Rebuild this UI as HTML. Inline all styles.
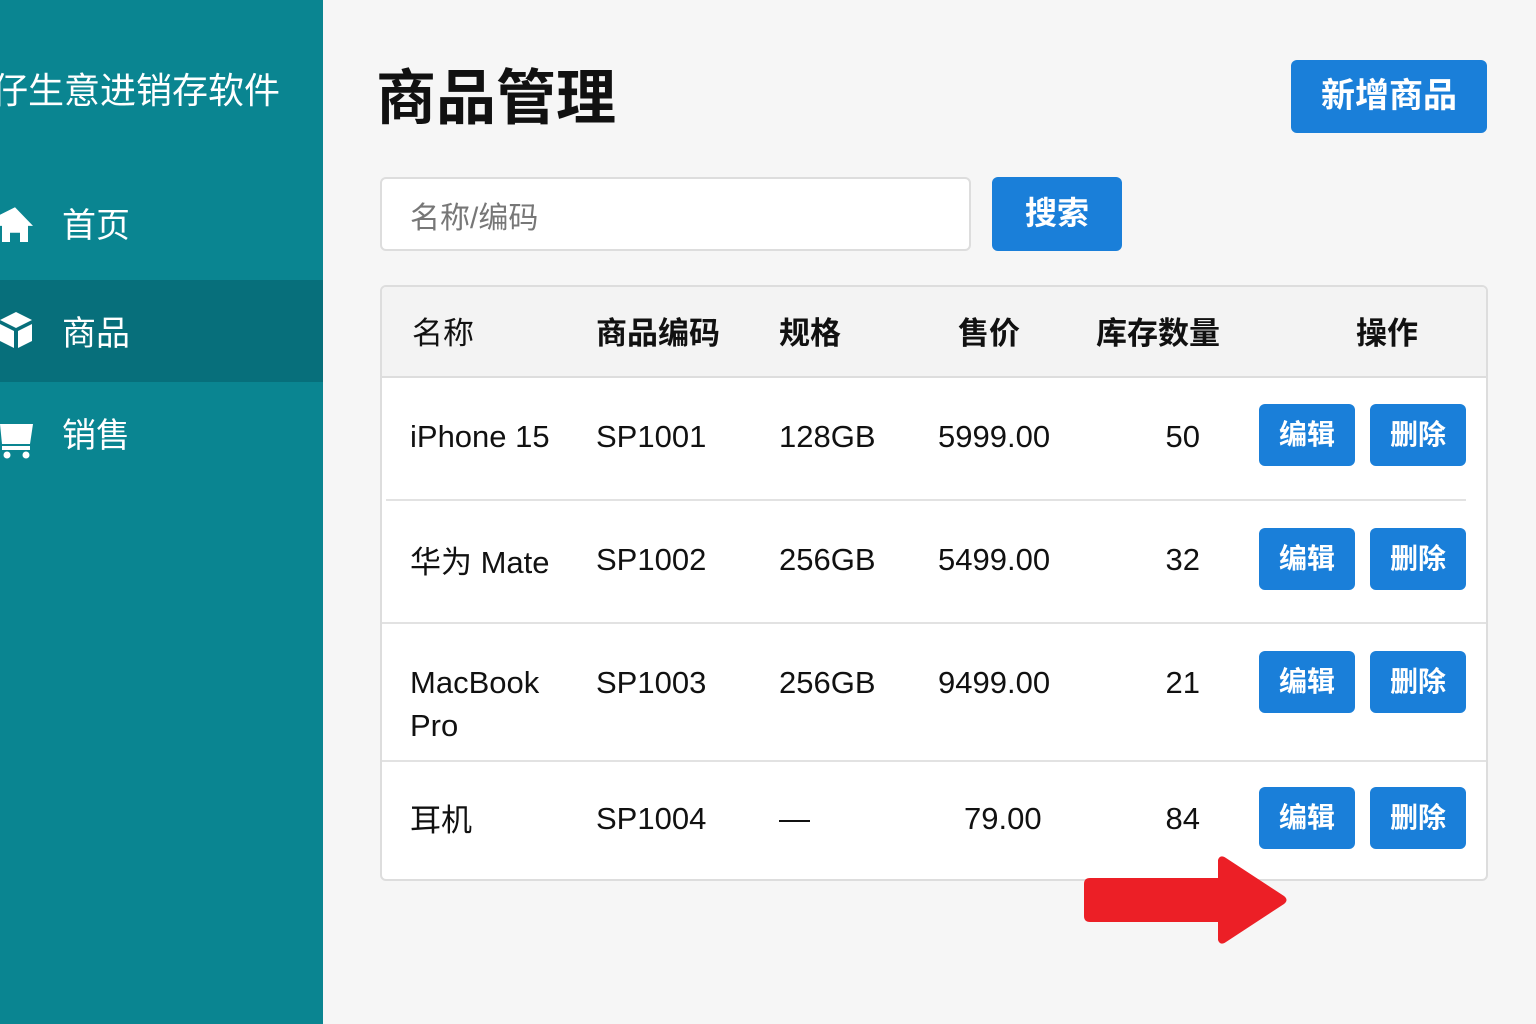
<!DOCTYPE html>
<html><head><meta charset="utf-8"><style>
*{margin:0;padding:0;box-sizing:border-box}
body{width:1536px;height:1024px;background:#f6f6f6;font-family:"Liberation Sans","Noto Sans CJK SC",sans-serif;position:relative;overflow:hidden;color:#111}
.side{position:absolute;left:0;top:0;width:323px;height:1024px;background:#0a8591}
.brand{position:absolute;left:-8px;top:62px;font-size:36px;color:#fff;white-space:nowrap}
.nav{position:absolute;left:0;width:323px;height:102px;color:#fff;font-size:34px}
.nav span{position:absolute;left:62px;top:26px}
.nav svg{position:absolute;left:0;top:34px}
.a{position:absolute}
.btn{position:absolute;background:#1a7fd9;color:#fff;border-radius:6px;font-weight:bold;text-align:center}
.table{position:absolute;left:380px;top:285px;width:1108px;height:596px;background:#fff;border:2px solid #ddd;border-radius:6px;overflow:hidden}
.th{position:absolute;top:0;left:0;right:0;height:91px;background:#f3f3f3;border-bottom:2px solid #ddd}
.t{position:absolute;font-size:31px;white-space:nowrap}
.h{font-weight:bold;font-size:31px}
.line{position:absolute;height:2px;background:#e2e2e2}
.sb{position:absolute;width:96px;height:62px;background:#1a7fd9;color:#fff;border-radius:6px;font-weight:bold;font-size:28px;text-align:center;line-height:62px}
</style></head><body>
<div class="side">
<div class="brand">仔生意进销存软件</div>
<div class="nav" style="top:172px"><svg width="36" height="36" viewBox="0 0 36 36"><path d="M0 2 L17 -8 L35 14 L30 14 L30 34 L22 34 L22 22 L12 22 L12 34 L4 34 L4 14 L0 14Z" fill="#fff" transform="translate(-2,8) scale(1,0.85)"/></svg><span>首页</span></div>
<div class="nav" style="top:280px;background:#076f7b"><svg width="36" height="40" viewBox="0 0 36 40" style="top:30px"><path d="M16 2 L32 10 L16 18 L0 10Z" fill="#fff"/><path d="M0 14 L14 21 L14 38 L0 31Z M18 21 L32 14 L32 31 L18 38Z" fill="#fff"/></svg><span>商品</span></div>
<div class="nav" style="top:382px"><svg width="36" height="40" viewBox="0 0 36 40" style="top:40px"><path d="M0 2 L33 2 L30 22 L2 22Z" fill="#fff"/><rect x="2" y="24" width="28" height="4" fill="#fff"/><circle cx="7" cy="33" r="3.5" fill="#fff"/><circle cx="26" cy="33" r="3.5" fill="#fff"/></svg><span>销售</span></div>
</div>
<div class="a" style="left:376px;top:50px;font-size:60px;font-weight:bold">商品管理</div>
<div class="btn" style="left:1291px;top:60px;width:196px;height:73px;font-size:34px;line-height:73px">新增商品</div>
<div class="a" style="left:380px;top:177px;width:591px;height:74px;background:#fff;border:2px solid #ddd;border-radius:6px;font-size:30px;color:#777;padding:14px 28px">名称/编码</div>
<div class="btn" style="left:992px;top:177px;width:130px;height:74px;font-size:32px;line-height:72px">搜索</div>
<div class="table">
<div class="th"></div>
<div class="t h" style="left:30px;top:21px;font-weight:normal">名称</div>
<div class="t h" style="left:214px;top:21px">商品编码</div>
<div class="t h" style="left:397px;top:21px">规格</div>
<div class="t h" style="left:576px;top:21px">售价</div>
<div class="t h" style="left:714px;top:21px">库存数量</div>
<div class="t h" style="left:974px;top:21px">操作</div>
<div class="line" style="left:4px;width:1080px;top:212px"></div>
<div class="line" style="left:0;right:0;top:335px"></div>
<div class="line" style="left:0;right:0;top:473px"></div>

<div class="t" style="left:28px;top:132px">iPhone 15</div><div class="t" style="left:214px;top:132px">SP1001</div><div class="t" style="left:397px;top:132px">128GB</div><div class="t" style="left:556px;top:132px">5999.00</div><div class="t" style="right:286px;top:132px">50</div>
<div class="sb" style="left:877px;top:117px">编辑</div><div class="sb" style="left:988px;top:117px">删除</div>

<div class="t" style="left:28px;top:250px">华为 Mate</div><div class="t" style="left:214px;top:255px">SP1002</div><div class="t" style="left:397px;top:255px">256GB</div><div class="t" style="left:556px;top:255px">5499.00</div><div class="t" style="right:286px;top:255px">32</div>
<div class="sb" style="left:877px;top:241px">编辑</div><div class="sb" style="left:988px;top:241px">删除</div>

<div class="t" style="left:28px;top:378px">MacBook</div><div class="t" style="left:28px;top:421px">Pro</div><div class="t" style="left:214px;top:378px">SP1003</div><div class="t" style="left:397px;top:378px">256GB</div><div class="t" style="left:556px;top:378px">9499.00</div><div class="t" style="right:286px;top:378px">21</div>
<div class="sb" style="left:877px;top:364px">编辑</div><div class="sb" style="left:988px;top:364px">删除</div>

<div class="t" style="left:28px;top:508px">耳机</div><div class="t" style="left:214px;top:514px">SP1004</div><div class="t" style="left:397px;top:514px">—</div><div class="t" style="left:582px;top:514px">79.00</div><div class="t" style="right:286px;top:514px">84</div>
<div class="sb" style="left:877px;top:500px">编辑</div><div class="sb" style="left:988px;top:500px">删除</div>
</div>
<svg class="a" style="left:0;top:0" width="1536" height="1024"><path d="M1090 878 L1218 878 L1218 860 Q1220 854 1226 858 L1284 896 Q1289 900 1284 904 L1226 942 Q1220 946 1218 940 L1218 922 L1090 922 Q1084 922 1084 916 L1084 884 Q1084 878 1090 878Z" fill="#ec1f26"/></svg>
</body></html>
